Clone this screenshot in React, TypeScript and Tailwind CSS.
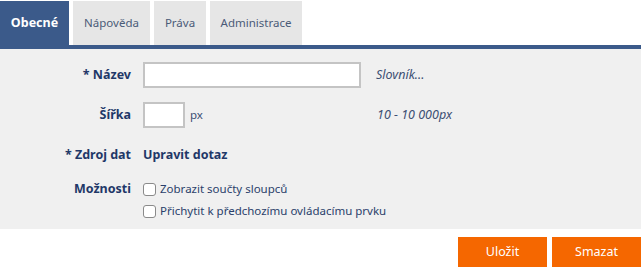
import React from 'react';

const tabs = [
  { label: 'Obecné', w: 'w-[69px]' },
  { label: 'Nápověda', w: 'w-[77px]' },
  { label: 'Práva', w: 'w-[52px]' },
  { label: 'Administrace', w: 'w-[92px]' },
];

function Check({ label }: { label: string }) {
  return (
    <label className="flex items-center gap-[4px] h-[18px] text-[#2a3f6b]">
      <span className="w-[13px] h-[13px] bg-white border border-[#8a8a8a] rounded-[3px]" />
      {label}
    </label>
  );
}

export default function App() {
  return (
    <div className="w-[644px] h-[270px] bg-white pt-px font-['Noto_Sans',sans-serif] text-[11.5px]">
      {/* Tabs */}
      <div className="flex gap-[4px] w-[641px] h-[44px]">
        {tabs.map((t, i) => (
          <div
            key={t.label}
            className={
              i === 0
                ? `${t.w} h-full flex items-center justify-center bg-[#3b5a8a] text-white font-bold text-[12.5px]`
                : `${t.w} h-full flex items-center justify-center bg-[#e6e6e6] text-[#4b5b78]`
            }
          >
            {t.label}
          </div>
        ))}
      </div>
      <div className="w-[641px] h-[4px] bg-[#3b5a8a]" />

      {/* Panel */}
      <div className="w-[641px] h-[180px] bg-[#f0f0f0] pt-[13px] text-[#1f3868]">
        <div className="flex items-center h-[26px]">
          <div className="w-[131px] text-right font-bold text-[12.5px]">* Název</div>
          <input className="ml-[12px] w-[218px] h-[26px] bg-white border-2 border-[#c4c4c4] outline-none" />
          <div className="ml-[15px] italic text-[12.5px] text-[#3d4f73]">Slovník...</div>
        </div>

        <div className="flex items-center h-[26px] mt-[14px]">
          <div className="w-[131px] text-right font-bold text-[12.5px]">Šířka</div>
          <div className="ml-[12px] w-[218px] flex items-center">
            <input className="w-[42px] h-[26px] bg-white border-2 border-[#c4c4c4] outline-none" />
            <span className="ml-[5px] text-[#3d4f73]">px</span>
          </div>
          <div className="ml-[16px] italic text-[12.5px] text-[#3d4f73]">10 - 10 000px</div>
        </div>

        <div className="flex items-center h-[26px] mt-[14px]">
          <div className="w-[131px] text-right font-bold text-[12.5px]">* Zdroj dat</div>
          <div className="ml-[12px] font-bold text-[12.5px]">Upravit dotaz</div>
        </div>

        <div className="flex items-start mt-[12px]">
          <div className="w-[131px] text-right font-bold text-[12.5px] leading-[18px]">Možnosti</div>
          <div className="ml-[12px] flex flex-col gap-[4px]">
            <Check label="Zobrazit součty sloupců" />
            <Check label="Přichytit k předchozímu ovládacímu prvku" />
          </div>
        </div>
      </div>

      {/* Buttons */}
      <div className="w-[641px] flex justify-end gap-[5px] mt-[8px]">
        <button className="w-[89px] h-[30px] bg-[#f56700] text-white text-[12.5px]">Uložit</button>
        <button className="w-[89px] h-[30px] bg-[#f56700] text-white text-[12.5px]">Smazat</button>
      </div>
    </div>
  );
}
